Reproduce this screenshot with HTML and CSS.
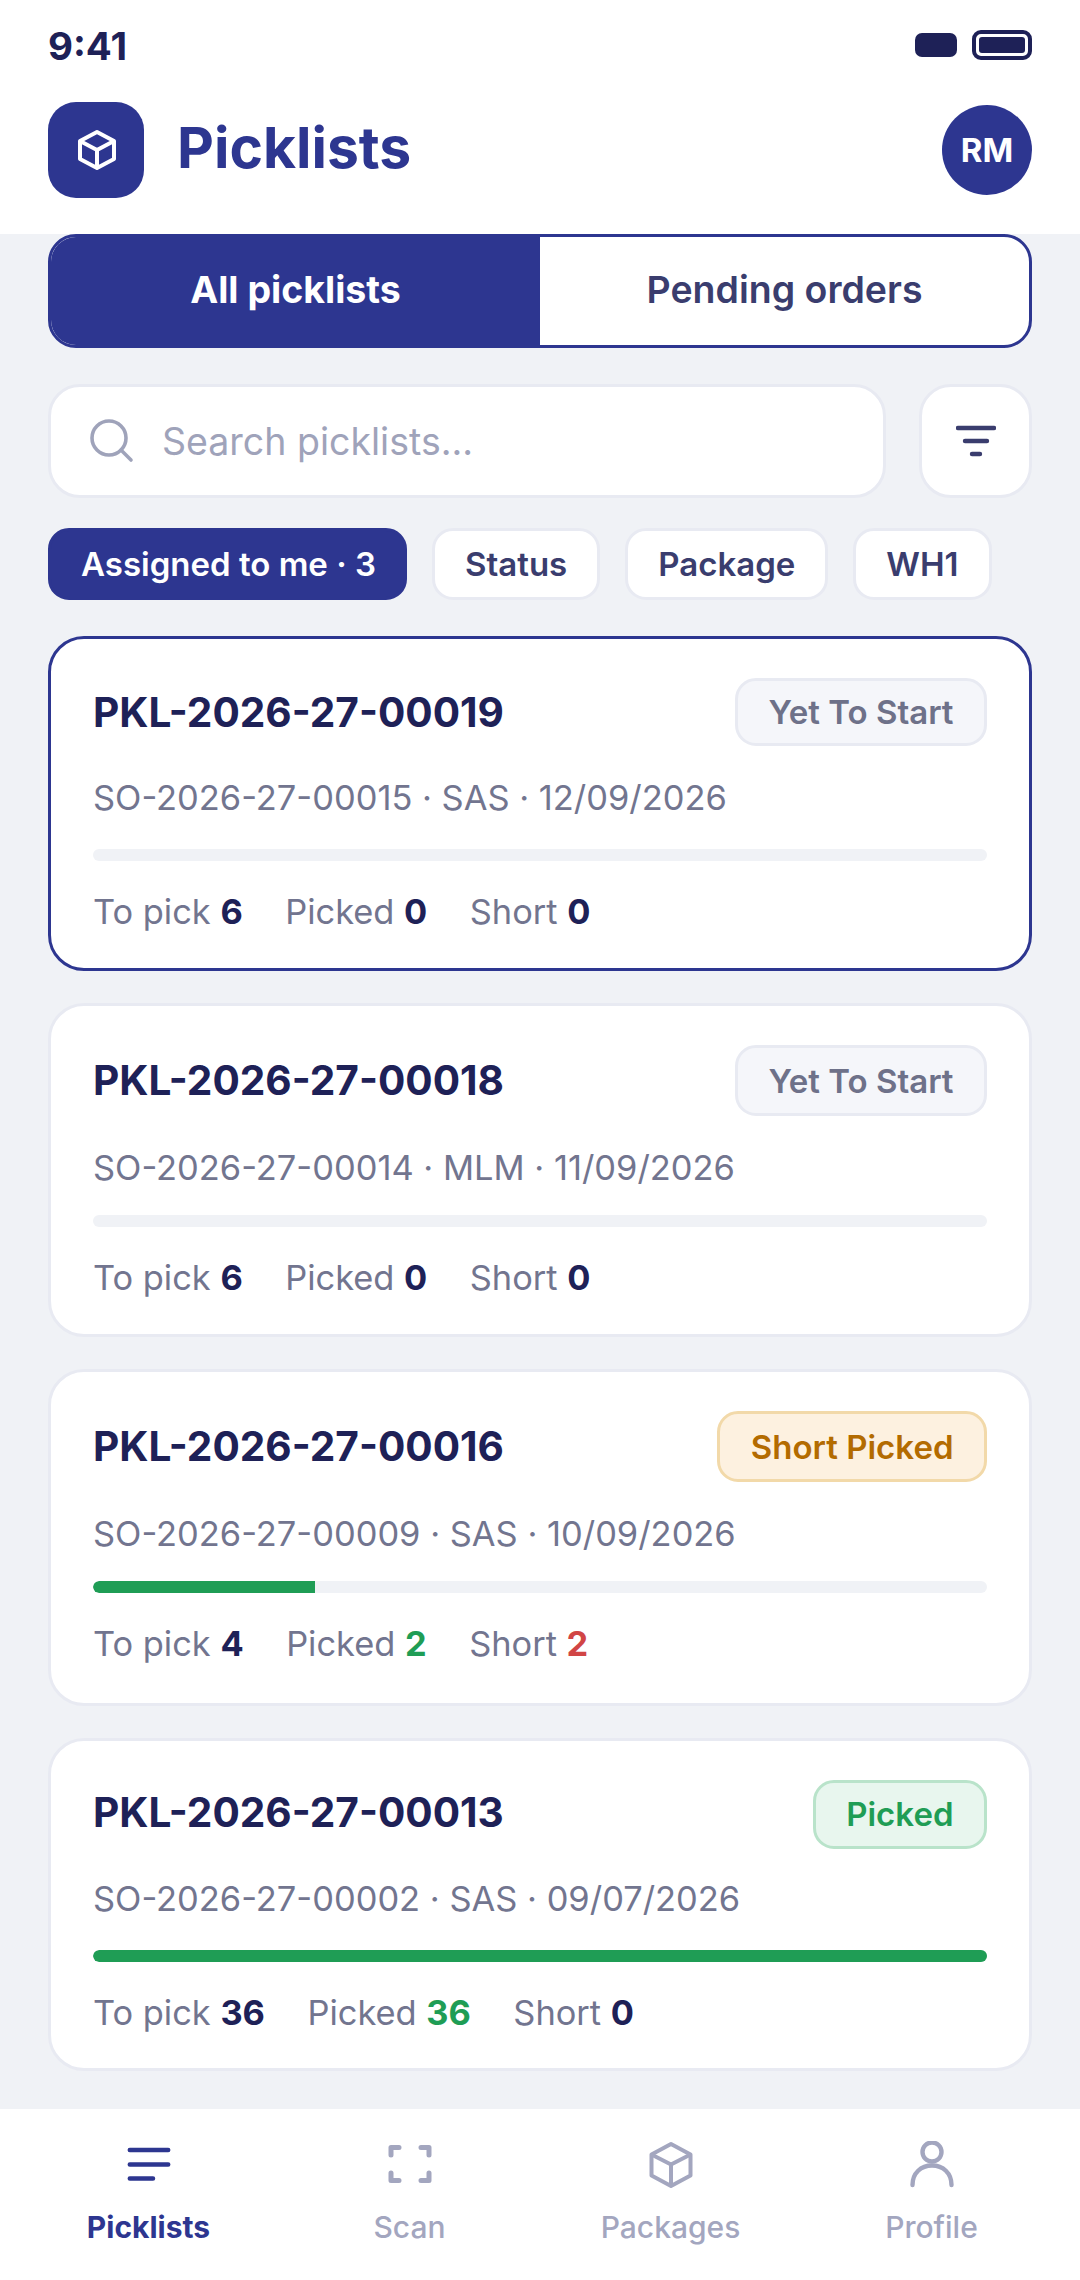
FILE: index.html
```html
<!DOCTYPE html>
<html lang="en">
<head>
<meta charset="utf-8">
<title>Picklists</title>
<link rel="stylesheet" href="styles.css">
</head>
<body>
<div class="app">
  <div class="top">
    <div class="status">
      <span class="time">9:41</span>
      <div class="status-icons"><span class="signal"></span><span class="battery"><span class="battery-fill"></span></span></div>
    </div>
    <header class="header">
      <div class="logo">
        <svg width="48" height="48" viewBox="-0.500 0 24 24" fill="none" stroke="#fff" stroke-width="2" stroke-linejoin="round"><path d="M12 3l8.500 4.500v9L12 21l-8.500-4.500v-9z"/><path d="M3.500 7.500L12 12l8.500-4.500M12 12v9"/></svg>
      </div>
      <h1 class="title">Picklists</h1>
      <div class="avatar">RM</div>
    </header>
  </div>
  <main class="main">
    <div class="segment"><div class="seg seg-on">All picklists</div><div class="seg">Pending orders</div></div>
    <div class="search-row">
      <div class="search">
        <svg width="48" height="48" viewBox="0 0 48 48" fill="none" stroke="#9fa3ba" stroke-width="3.600" stroke-linecap="round"><circle cx="22" cy="21" r="17"/><path d="M34 33l10 10"/></svg>
        <span>Search picklists...</span>
      </div>
      <div class="filter">
        <svg width="40" height="32" viewBox="0 0 40 32" fill="none" stroke="#3a3d6e" stroke-width="4.400" stroke-linecap="round"><path d="M2 3h36M9 16h22M16 29h8"/></svg>
      </div>
    </div>
    <div class="chips">
      <span class="chip chip-on">Assigned to me · 3</span><span class="chip">Status</span><span class="chip">Package</span><span class="chip">WH1</span>
    </div>
    <article class="card card-on">
      <div class="card-top">
        <div class="card-head"><span class="code">PKL-2026-27-00019</span><span class="badge b-grey">Yet To Start</span></div>
        <div class="sub">SO-2026-27-00015 · SAS · 12/09/2026</div>
      </div>
      <div class="bar"></div>
      <div class="stats"><span>To pick <b>6</b></span><span>Picked <b>0</b></span><span>Short <b>0</b></span></div>
    </article>
    <article class="card card-wide">
      <div class="card-top">
        <div class="card-head"><span class="code">PKL-2026-27-00018</span><span class="badge b-grey">Yet To Start</span></div>
        <div class="sub">SO-2026-27-00014 · MLM · 11/09/2026</div>
      </div>
      <div class="bar"></div>
      <div class="stats"><span>To pick <b>6</b></span><span>Picked <b>0</b></span><span>Short <b>0</b></span></div>
    </article>
    <article class="card card-wide card-tall">
      <div class="card-top">
        <div class="card-head"><span class="code">PKL-2026-27-00016</span><span class="badge b-amber">Short Picked</span></div>
        <div class="sub">SO-2026-27-00009 · SAS · 10/09/2026</div>
      </div>
      <div class="bar"><div class="fill" style="width:24.8%"></div></div>
      <div class="stats"><span>To pick <b>4</b></span><span>Picked <b class="green">2</b></span><span>Short <b class="red">2</b></span></div>
    </article>
    <article class="card card-low">
      <div class="card-top">
        <div class="card-head"><span class="code">PKL-2026-27-00013</span><span class="badge b-green">Picked</span></div>
        <div class="sub">SO-2026-27-00002 · SAS · 09/07/2026</div>
      </div>
      <div class="bar"><div class="fill" style="width:100%"></div></div>
      <div class="stats"><span>To pick <b>36</b></span><span>Picked <b class="green">36</b></span><span>Short <b>0</b></span></div>
    </article>
  </main>
  <nav class="nav">
    <div class="tab tab-on">
      <svg width="48" height="48" viewBox="0 0 48 48" fill="none" stroke="#2d3690" stroke-width="4.500" stroke-linecap="round"><path d="M4.800 9h38.400M4.800 23.500h38.400M4.800 37.500H28"/></svg>
      <span>Picklists</span>
    </div>
    <div class="tab">
      <svg width="48" height="48" viewBox="0 0 48 48" fill="none" stroke="#a3a6bf" stroke-width="5" stroke-linecap="round" stroke-linejoin="round"><path d="M5 14V6.500h8M35 6.500h8V14M5 32v7.500h8M35 39.500h8V32"/></svg>
      <span>Scan</span>
    </div>
    <div class="tab">
      <svg width="48" height="48" viewBox="0 0 48 48" fill="none" stroke="#a3a6bf" stroke-width="4" stroke-linejoin="round"><path d="M24 3l19.500 10.500v21L24 45 4.500 34.500v-21z"/><path d="M4.500 13.500L24 23.500l19.500-10M24 23.500V45"/></svg>
      <span>Packages</span>
    </div>
    <div class="tab">
      <svg width="48" height="48" viewBox="0 0 48 48" fill="none" stroke="#a3a6bf" stroke-width="4.400" stroke-linecap="round"><circle cx="24" cy="11" r="9.500"/><path d="M4.500 44c0-12 8.500-19.500 19.500-19.500S43.500 32 43.500 44"/></svg>
      <span>Profile</span>
    </div>
  </nav>
</div>
</body>
</html>
```

FILE: styles.css
```css
* { box-sizing: border-box; }
html, body { margin: 0; padding: 0; }
body { font-family: Inter, "Liberation Sans", sans-serif; background: #f0f2f6; color: #1e2157; }
.app { width: 1080px; height: 2280px; display: flex; flex-direction: column; overflow: hidden; }
.top { background: #fff; height: 234px; padding: 0 48px; flex: none; }
.status { height: 90px; display: flex; justify-content: space-between; align-items: center; }
.time { font-size: 38.500px; font-weight: 700; color: #1e2157; position: relative; top: 1px; }
.status-icons { display: flex; align-items: center; gap: 15px; }
.signal { width: 42px; height: 24px; border-radius: 7px; background: #1e2157; }
.battery { width: 60px; height: 30px; border: 4px solid #1e2157; border-radius: 9px; padding: 3px; display: flex; }
.battery-fill { flex: 1; background: #1e2157; border-radius: 3px; }
.header { display: flex; align-items: center; height: 96px; margin-top: 12px; }
.logo { width: 96px; height: 96px; border-radius: 28px; background: #2d3690; display: flex; align-items: center; justify-content: center; flex: none; }
.title { margin: 0 0 6px 33px; font-size: 57px; font-weight: 700; color: #2d3690; flex: 1; }
.avatar { width: 90px; height: 90px; border-radius: 50%; background: #2d3690; color: #fff; font-size: 33px; font-weight: 700; display: flex; align-items: center; justify-content: center; }
.main { flex: 1; padding: 0 48px; min-height: 0; overflow: hidden; }
.segment { height: 114px; display: flex; border: 3px solid #2d3690; border-radius: 28px; overflow: hidden; background: #fff; }
.seg { flex: 1; display: flex; align-items: center; justify-content: center; padding-bottom: 4px; font-size: 37.500px; font-weight: 600; color: #3a3d6e; }
.seg-on { background: #2d3690; color: #fff; font-weight: 700; }
.search-row { display: flex; gap: 33px; margin-top: 36px; height: 114px; }
.search { flex: 1; background: #fff; border: 3px solid #e8eaf2; border-radius: 32px; display: flex; align-items: center; gap: 27px; padding: 0 36px; font-size: 37.500px; color: #9fa3ba; }
.filter { width: 113px; background: #fff; border: 3px solid #e8eaf2; border-radius: 32px; display: flex; align-items: center; justify-content: center; }
.chips { display: flex; gap: 25px; margin-top: 30px; }
.chip { height: 72px; padding: 0 30px; display: flex; align-items: center; background: #fff; border: 3px solid #e8eaf2; border-radius: 21px; font-size: 33px; font-weight: 600; color: #3a3d6e; }
.chip-on { padding-right: 28px; background: #2d3690; border-color: #2d3690; color: #fff; }
.card { background: #fff; border: 3px solid #e8eaf2; border-radius: 36px; padding: 39px 42px 0; height: 334px; margin-bottom: 32px; }
.chips + .card { margin-top: 36px; }
.card-on { border-color: #2d3690; height: 335px; }
.card-tall { height: 337px; }
.card-low { height: 333px; }
.card-top { height: 170px; }
.card-on .card-top { height: 171px; }
.card-head { display: flex; align-items: center; justify-content: space-between; height: 68px; }
.card-wide .card-head { height: 71px; }
.card-wide .badge { height: 71px; }
.card-low .badge { height: 69px; }
.card-low .code { margin-bottom: 4px; }
.card-low .sub { margin-top: 29px; }
.code { font-size: 40.600px; font-weight: 700; color: #1e2157; }
.badge { height: 68px; padding: 0 30.500px; border: 3px solid; border-radius: 21px; display: flex; align-items: center; font-size: 33px; font-weight: 600; flex: none; }
.b-grey { background: #f5f6fa; border-color: #e8eaf2; color: #6e7189; }
.b-amber { background: #fdf1e0; border-color: #f2d9a9; color: #b36b00; }
.b-green { background: #e8f6ee; border-color: #b9e3ca; color: #1f9d55; }
.sub { font-size: 34.450px; color: #72758f; margin-top: 30px; line-height: 44px; }
.bar { height: 12px; border-radius: 6px; background: #f0f2f6; overflow: hidden; }
.fill { height: 100%; background: #1f9d55; border-radius: 6px 0 0 6px; }
.stats { display: flex; gap: 42.500px; margin-top: 29px; font-size: 34.400px; color: #72758f; line-height: 44px; }
.stats b { color: #1e2157; font-weight: 700; }
.stats b.green { color: #1f9d55; }
.stats b.red { color: #d14545; }
.nav { height: 171px; flex: none; background: #fff; display: grid; grid-template-columns: repeat(4, 261px); padding: 32px 18px 0; }
.tab { display: flex; flex-direction: column; align-items: center; gap: 20px; font-size: 30px; font-weight: 500; color: #a3a6bf; }
.tab-on { color: #2d3690; font-weight: 700; }
```
